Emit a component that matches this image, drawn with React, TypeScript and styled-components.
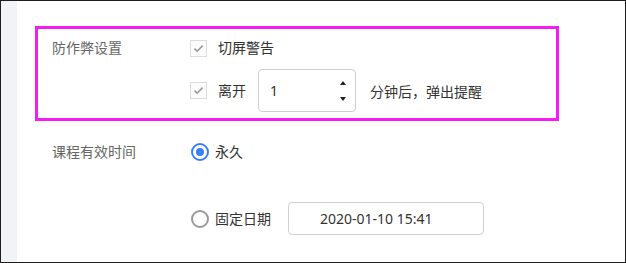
import styled, { createGlobalStyle } from "styled-components";

const GlobalStyle = createGlobalStyle`
	html, body {
		margin: 0;
		padding: 0;
		background: #fff;
	}
	body {
		font-family: "Noto Sans", "Noto Sans CJK SC", sans-serif;
		font-size: 14px;
	}
`;

const CheckIcon = () => (
	<svg width="11" height="9" viewBox="0 0 11 9">
		<path d="M1.5 4.6 L4.2 7.2 L9.6 1.6" fill="none" stroke="#9a9a9a" strokeWidth="1.6" />
	</svg>
);

interface CheckboxProps {
	label: string;
}

const Checkbox = ({ label }: CheckboxProps) => (
	<Option>
		<CheckBoxMark>
			<CheckIcon />
		</CheckBoxMark>
		<OptionLabel>{label}</OptionLabel>
	</Option>
);

interface RadioProps {
	label: string;
	checked?: boolean;
}

const Radio = ({ label, checked }: RadioProps) => (
	<RadioOption>
		<RadioMark checked={checked} />
		<OptionLabel>{label}</OptionLabel>
	</RadioOption>
);

const App = () => {
	return (
		<>
			<GlobalStyle />
			<Frame>
				<SideStrip />
				<Content>
					<HighlightBox>
						<FieldLabel>防作弊设置</FieldLabel>
						<Controls>
							<CheckRow>
								<Checkbox label="切屏警告" />
							</CheckRow>
							<LeaveRow>
								<Checkbox label="离开" />
								<NumberBox>
									<span>1</span>
									<Spinner>
										<Arrow />
										<Arrow down />
									</Spinner>
								</NumberBox>
								<Hint>分钟后，弹出提醒</Hint>
							</LeaveRow>
						</Controls>
					</HighlightBox>

					<ValiditySection>
						<FieldLabel>课程有效时间</FieldLabel>
						<RadioGroup>
							<Radio label="永久" checked />
							<DateRow>
								<Radio label="固定日期" />
								<DateBox>2020-01-10 15:41</DateBox>
							</DateRow>
						</RadioGroup>
					</ValiditySection>
				</Content>
			</Frame>
		</>
	);
};

export default App;

const Frame = styled.div`
	box-sizing: border-box;
	width: 626px;
	height: 263px;
	border: 1px solid #1e1e1e;
	display: flex;
	overflow: hidden;
`;

const SideStrip = styled.div`
	width: 16px;
	flex-shrink: 0;
	background: #f2f3f7;
`;

const Content = styled.div`
	flex: 1;
	background: #fff;
	padding: 25px 0 0 18px;
`;

const HighlightBox = styled.div`
	box-sizing: border-box;
	width: 524px;
	height: 95px;
	border: 3px solid #f31cf3;
	display: flex;
	padding: 10px 0 0 14px;
`;

const FieldLabel = styled.div`
	width: 138px;
	flex-shrink: 0;
	color: #666;
	line-height: 16px;
	padding-top: 1px;
`;

const Controls = styled.div`
	display: flex;
	flex-direction: column;
	gap: 12px;
`;

const CheckRow = styled.div`
	height: 18px;
	display: flex;
	align-items: center;
`;

const LeaveRow = styled.div`
	height: 43px;
	display: flex;
	align-items: center;
`;

const Option = styled.label`
	display: flex;
	align-items: center;
	gap: 11px;
`;

const CheckBoxMark = styled.span`
	box-sizing: border-box;
	width: 17px;
	height: 17px;
	border: 1px solid #dcdcdc;
	background: #fcfcfc;
	display: flex;
	align-items: center;
	justify-content: center;
`;

const OptionLabel = styled.span`
	color: #333;
	line-height: 18px;
`;

const NumberBox = styled.div`
	box-sizing: border-box;
	width: 98px;
	height: 43px;
	margin-left: 12px;
	border: 1px solid #cfcfcf;
	border-radius: 4px;
	display: flex;
	align-items: center;
	justify-content: space-between;
	padding: 0 9px 0 11px;
	color: #333;
`;

const Spinner = styled.div`
	display: flex;
	flex-direction: column;
	gap: 12px;
`;

const Arrow = styled.span<{ down?: boolean }>`
	width: 0;
	height: 0;
	border-left: 3px solid transparent;
	border-right: 3px solid transparent;
	${(props) => (props.down ? "border-top: 4px solid #222;" : "border-bottom: 4px solid #222;")}
`;

const Hint = styled.span`
	margin-left: 14px;
	color: #333;
`;

const ValiditySection = styled.div`
	display: flex;
	padding: 22px 0 0 17px;
`;

const RadioGroup = styled.div`
	display: flex;
	flex-direction: column;
	gap: 41px;
	padding-left: 1px;
`;

const RadioOption = styled.label`
	display: flex;
	align-items: center;
	gap: 6px;
	height: 18px;
`;

const RadioMark = styled.span<{ checked?: boolean }>`
	box-sizing: border-box;
	width: 18px;
	height: 18px;
	border-radius: 50%;
	border: 2px solid ${(props) => (props.checked ? "#3a7ff6" : "#9a9a9a")};
	display: flex;
	align-items: center;
	justify-content: center;

	&::after {
		content: "";
		width: 8px;
		height: 8px;
		border-radius: 50%;
		background: ${(props) => (props.checked ? "#3a7ff6" : "transparent")};
	}
`;

const DateRow = styled.div`
	display: flex;
	align-items: center;
	gap: 17px;
`;

const DateBox = styled.div`
	box-sizing: border-box;
	width: 196px;
	height: 33px;
	border: 1px solid #d0d0d0;
	border-radius: 4px;
	display: flex;
	align-items: center;
	padding-left: 31px;
	color: #333;
`;
